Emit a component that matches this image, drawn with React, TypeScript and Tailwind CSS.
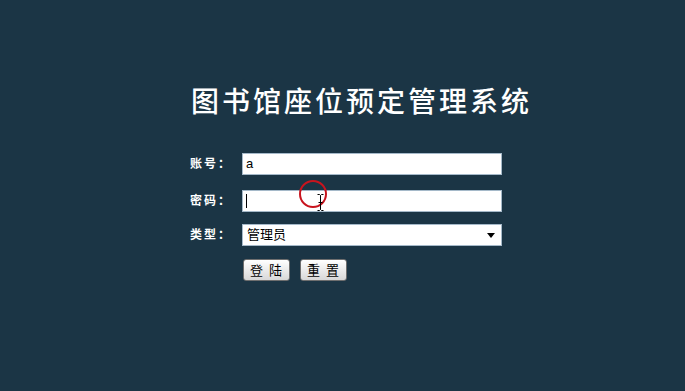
export default function App() {
  const labelCls =
    "w-[52px] text-[12px] font-bold text-white tracking-[2px]";
  const fieldCls =
    "h-[22px] w-[260px] border border-[#a5b9c9] bg-white px-[3px] text-[13px] text-black outline-none";
  const btnCls =
    "h-[22px] w-[47px] rounded-[3px] border border-[#6e6e6e] bg-gradient-to-b from-white to-[#d8d8d8] pl-[5px] text-[13px] leading-none tracking-[6px] text-black";

  return (
    <div
      className="h-[391px] w-full bg-[#1b3545] pt-[84px]"
      style={{ fontFamily: '"Liberation Sans", "Noto Sans CJK SC", sans-serif' }}
    >
      <h1 className="ml-[191px] w-[340px] whitespace-nowrap text-center text-[28px] font-medium leading-[38px] tracking-[3px] text-white">
        图书馆座位预定管理系统
      </h1>

      <div className="ml-[190px] mt-[31px] flex flex-col gap-[15px]">
        <div className="flex items-center">
          <span className={labelCls}>账号：</span>
          <div className={fieldCls + " flex items-center"}>a</div>
        </div>

        <div className="relative flex items-center">
          <span className={labelCls}>密码：</span>
          <div className={fieldCls + " flex items-center"}>
            <span className="h-[14px] w-px bg-black" />
          </div>
          <span className="absolute left-[109px] top-[-10px] h-[28px] w-[28px] rounded-full border-2 border-[#c8141e]" />
          {/* text cursor */}
          <svg className="absolute left-[127px] top-[4px]" width="7" height="17" viewBox="0 0 7 17">
            <path d="M0.5 0.5h2l1 1 1-1h2M3.5 1.5v14M0.5 16.5h2l1-1 1 1h2M1.5 8.5h4" stroke="#000" strokeWidth="1" fill="none" />
          </svg>
        </div>

        <div className="-mt-[3px] flex items-center">
          <span className={labelCls}>类型：</span>
          <div className={fieldCls + " flex items-center justify-between pl-[4px] pr-[6px]"}>
            <span className="text-[13px]">管理员</span>
            <svg width="8" height="5" viewBox="0 0 8 5">
              <path d="M0 0h8L4 5z" fill="#000" />
            </svg>
          </div>
        </div>

        <div className="-mt-[2px] ml-[53px] flex gap-[10px]">
          <button className={btnCls}>登陆</button>
          <button className={btnCls}>重置</button>
        </div>
      </div>
    </div>
  );
}
